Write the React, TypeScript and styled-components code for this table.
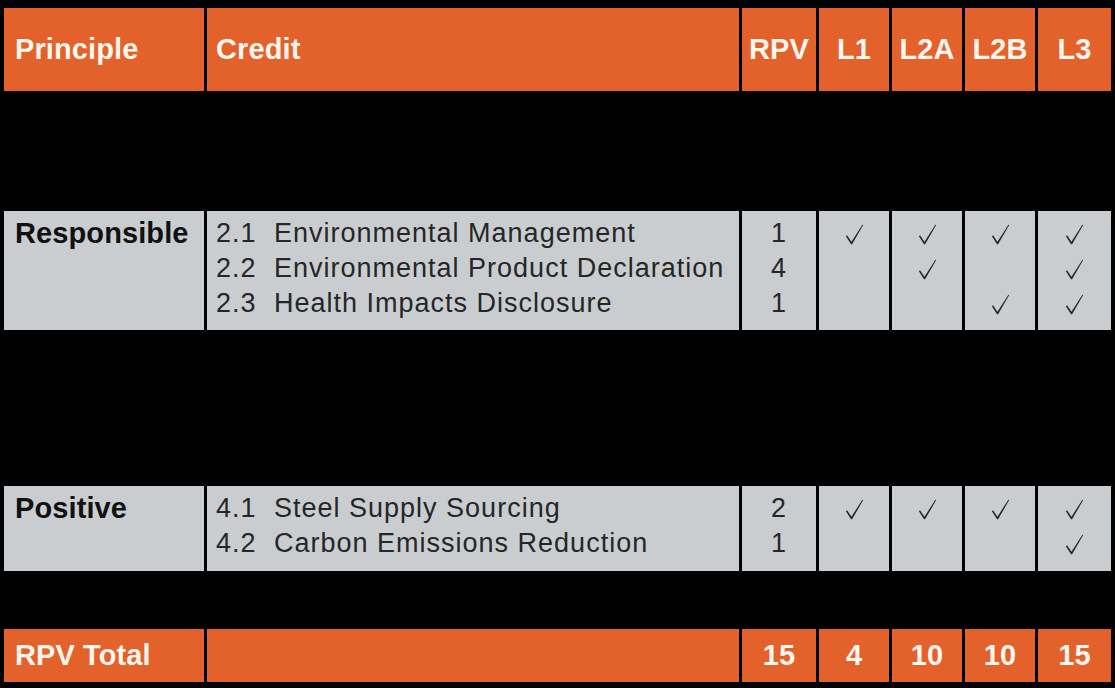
import React, { FC } from "react";
import styled, { createGlobalStyle } from "styled-components";

const ORANGE = "#e3622b";
const GREY = "#cacdd0";

const Global = createGlobalStyle`
  html, body {
    margin: 0;
    padding: 0;
    background: #000;
  }
  body {
    font-family: "Liberation Sans", Arial, Helvetica, sans-serif;
  }
`;

type Credit = { code: string; name: string; rpv: number; levels: boolean[] };
type Group = { principle: string; credits: Credit[] };

const groups: Group[] = [
  {
    principle: "Responsible",
    credits: [
      { code: "2.1", name: "Environmental Management", rpv: 1, levels: [true, true, true, true] },
      { code: "2.2", name: "Environmental Product Declaration", rpv: 4, levels: [false, true, false, true] },
      { code: "2.3", name: "Health Impacts Disclosure", rpv: 1, levels: [false, false, true, true] },
    ],
  },
  {
    principle: "Positive",
    credits: [
      { code: "4.1", name: "Steel Supply Sourcing", rpv: 2, levels: [true, true, true, true] },
      { code: "4.2", name: "Carbon Emissions Reduction", rpv: 1, levels: [false, false, false, true] },
    ],
  },
];

const levels = ["L1", "L2A", "L2B", "L3"];
const totals = [15, 4, 10, 10, 15];

const Page = styled.div`
  width: 1115px;
  height: 688px;
  padding: 8px 4px 6px;
  box-sizing: border-box;
  display: flex;
  flex-direction: column;
`;

const Row = styled.div<{ $h?: number; $tone: "head" | "body" }>`
  display: grid;
  grid-template-columns: 200px 532px 74px 70px 70px 70px 73px;
  column-gap: 3px;
  height: ${(p) => (p.$h ? `${p.$h}px` : "auto")};
  > div {
    background: ${(p) => (p.$tone === "head" ? ORANGE : GREY)};
  }
`;

const Spacer = styled.div<{ $h: number }>`
  height: ${(p) => p.$h}px;
  flex-shrink: 0;
`;

const HeadCell = styled.div<{ $center?: boolean; $pad?: number }>`
  display: flex;
  align-items: center;
  justify-content: ${(p) => (p.$center ? "center" : "flex-start")};
  padding-left: ${(p) => (p.$center ? 0 : p.$pad ?? 11)}px;
  color: #fdf6ef;
  font-weight: 700;
  font-size: 29px;
  letter-spacing: 0.1px;
`;

const BodyCell = styled.div<{ $pad?: number; $center?: boolean }>`
  padding: 5px 0 0 ${(p) => p.$pad ?? 0}px;
  display: flex;
  flex-direction: column;
  align-items: ${(p) => (p.$center ? "center" : "stretch")};
  color: #262626;
`;

const PrincipleName = styled.div`
  font-weight: 700;
  font-size: 29px;
  line-height: 35px;
  letter-spacing: 0.1px;
  color: #111;
`;

const Line = styled.div`
  height: 35px;
  line-height: 35px;
  font-size: 27px;
  letter-spacing: 1px;
  white-space: nowrap;
  display: flex;
  align-items: center;
  justify-content: inherit;
`;

const Code = styled.span`
  display: inline-block;
  width: 58px;
`;

const CheckBox = styled.div`
  height: 35px;
  display: flex;
  align-items: center;
  justify-content: center;
  svg {
    margin-top: 2px;
  }
`;

const Check: FC = () => (
  <svg width="19" height="21" viewBox="0 0 18 20">
    <path
      d="M0.8 11.6 L1.9 10.8 L6.1 16.8 L16.5 0.6 L17.3 1.0 L6.7 19.4 L5.7 19.4 Z"
      fill="#262626"
    />
  </svg>
);

const App: FC = () => (
  <>
    <Global />
    <Page>
      <Row $h={83} $tone="head">
        <HeadCell>Principle</HeadCell>
        <HeadCell $pad={9}>Credit</HeadCell>
        <HeadCell $center>RPV</HeadCell>
        {levels.map((l) => (
          <HeadCell key={l} $center>
            {l}
          </HeadCell>
        ))}
      </Row>
      {groups.map((g, gi) => (
        <React.Fragment key={g.principle}>
          <Spacer $h={gi === 0 ? 120 : 156} />
          <Row $h={gi === 0 ? 119 : 85} $tone="body">
            <BodyCell $pad={11}>
              <PrincipleName>{g.principle}</PrincipleName>
            </BodyCell>
            <BodyCell $pad={9}>
              {g.credits.map((c) => (
                <Line key={c.code}>
                  <Code>{c.code}</Code>
                  {c.name}
                </Line>
              ))}
            </BodyCell>
            <BodyCell $center>
              {g.credits.map((c) => (
                <Line key={c.code}>{c.rpv}</Line>
              ))}
            </BodyCell>
            {levels.map((l, li) => (
              <BodyCell key={l} $center>
                {g.credits.map((c) => (
                  <CheckBox key={c.code}>{c.levels[li] && <Check />}</CheckBox>
                ))}
              </BodyCell>
            ))}
          </Row>
        </React.Fragment>
      ))}
      <Spacer $h={58} />
      <Row $h={53} $tone="head">
        <HeadCell>RPV Total</HeadCell>
        <HeadCell />
        {totals.map((t, i) => (
          <HeadCell key={i} $center>
            {t}
          </HeadCell>
        ))}
      </Row>
    </Page>
  </>
);

export default App;
